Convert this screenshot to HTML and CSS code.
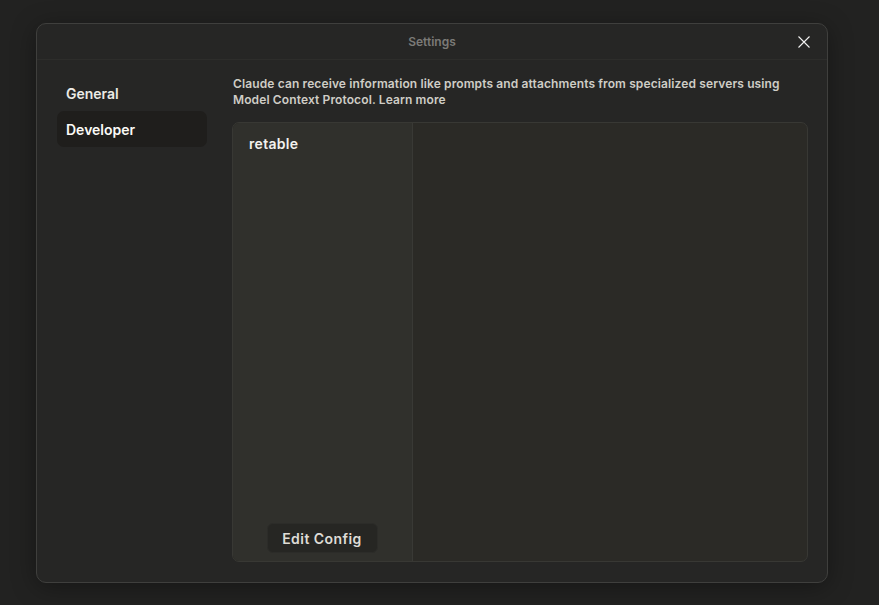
FILE: index.html
```html
<!DOCTYPE html>
<html>
<head>
<meta charset="utf-8">
<link rel="stylesheet" href="styles.css">
</head>
<body>
<div class="dialog">
  <div class="header">
    <span></span>
    <div class="title">Settings</div>
    <button class="close" aria-label="Close">
      <svg width="12" height="12" viewBox="0 0 12 12"><path d="M0.5 0.5L11.5 11.5M11.5 0.5L0.5 11.5" stroke="#f2f2f2" stroke-width="1.1" fill="none"/></svg>
    </button>
  </div>
  <div class="main">
    <nav class="sidebar">
      <div class="nav-item">General</div>
      <div class="nav-item active">Developer</div>
    </nav>
    <section class="content">
      <p class="desc">Claude can receive information like prompts and attachments from specialized servers using Model Context Protocol. Learn more</p>
      <div class="panel">
        <div class="servers">
          <div class="server">retable</div>
          <div class="spacer"></div>
          <button class="edit">Edit Config</button>
        </div>
        <div class="detail"></div>
      </div>
    </section>
  </div>
</div>
</body>
</html>
```
FILE: styles.css
```css
* { box-sizing: border-box; }
html, body { margin: 0; height: 100%; }
body {
  background: #222221;
  padding: 23px 0 0 36px;
  font-family: Inter, Lato, "Noto Sans", sans-serif;
  overflow: hidden;
}
.dialog {
  width: 792px;
  height: 560px;
  background: #262625;
  border: 1px solid #3f3f3d;
  border-radius: 10px;
  box-shadow: 0 4px 24px rgba(0,0,0,0.35);
  display: flex;
  flex-direction: column;
}
.header {
  height: 36px;
  border-bottom: 1px solid #2d2d2b;
  display: grid;
  grid-template-columns: 1fr auto 1fr;
  align-items: center;
}
.title {
  color: #7b7a77;
  font-size: 12px;
  font-weight: 600;
}
.close {
  justify-self: end;
  margin-right: 17px;
  background: none;
  border: 0;
  padding: 0;
  width: 12px;
  height: 12px;
  display: block;
}
.close svg { display: block; }
.main {
  flex: 1;
  display: flex;
  min-height: 0;
}
.sidebar {
  width: 195px;
  padding: 15px 0 0 20px;
  display: flex;
  flex-direction: column;
}
.nav-item {
  width: 150px;
  height: 36px;
  display: flex;
  align-items: center;
  padding-left: 9px;
  color: #ecebe6;
  font-size: 14px;
  font-weight: 600;
  border-radius: 7px;
}
.nav-item.active {
  background: #1f1e1c;
  color: #fbfaf6;
}
.content {
  flex: 1;
  padding: 16px 19px 20px 0;
  display: flex;
  flex-direction: column;
}
.desc {
  margin: 0 0 14px 1px;
  color: #cfcdc6;
  font-size: 12px;
  font-weight: 600;
  line-height: 16px;
  letter-spacing: 0.12px;
  padding-right: 20px;
}
.panel {
  flex: 1;
  border: 1px solid #383834;
  border-radius: 7px;
  display: flex;
  overflow: hidden;
  background: #2b2a26;
}
.servers {
  width: 180px;
  background: #30302c;
  border-right: 1px solid #393935;
  display: flex;
  flex-direction: column;
  align-items: stretch;
  padding: 11px 0 8px 0;
}
.server {
  padding-left: 16px;
  color: #f3f2ee;
  font-size: 14px;
  font-weight: 600;
  line-height: 20px;
  letter-spacing: 0.3px;
}
.spacer { flex: 1; }
.edit {
  align-self: center;
  width: 111px;
  height: 30px;
  background: #262623;
  border: 1px solid #2c2c29;
  border-radius: 6px;
  color: #dedcd6;
  font-family: Inter, Lato, "Noto Sans", sans-serif;
  font-size: 14px;
  font-weight: 600;
  letter-spacing: 0.45px;
  margin-right: 1px;
}
.detail { flex: 1; }
```
